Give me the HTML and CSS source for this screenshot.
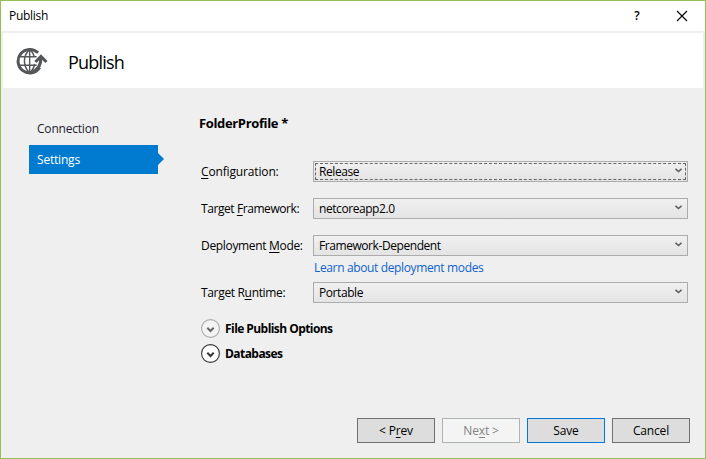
FILE: index.html
```html
<!DOCTYPE html>
<html lang="en">
<head>
<meta charset="utf-8">
<title>Publish</title>
<link rel="stylesheet" href="styles.css">
</head>
<body>
<div class="window">
  <div class="titlebar">
    <span class="caption">Publish</span>
    <span class="help">?</span>
    <svg class="close" width="12" height="12" viewBox="0 0 12 12"><path d="M1 1l10 10M11 1L1 11" stroke="#000" stroke-width="1.1" fill="none"/></svg>
  </div>
  <div class="header">
    <svg class="globe" width="32" height="28" viewBox="0 0 34 30" fill="none" stroke="#555658">
      <path d="M23.500 6.200A12.600 12.600 0 1 0 25.300 22" stroke-width="3.200"/>
      <path d="M14.500 2v26M3 10.500h19M3 19.500h19" stroke-width="1.500"/>
      <path d="M14.500 2.500C7 9 7 21 14.500 27.500M14.500 2.500C17.500 5 19 7.500 19.600 10.500M19.800 18C19.200 22 17.500 25 14.500 27.500" stroke-width="1.600"/>
      <path d="M16.500 27C23.500 24 26.500 20 26.600 11" stroke-width="3.300"/>
      <path d="M20.600 16L26.600 10L32.500 16" stroke-width="3.200"/>
    </svg>
    <h1 class="heading">Publish</h1>
  </div>
  <div class="body">
    <nav class="nav">
      <div class="nav-item">Connection</div>
      <div class="nav-item active">Settings</div>
    </nav>
    <main class="main">
      <h2 class="profile">FolderProfile *</h2>
      <div class="row">
        <label class="l-conf"><u>C</u>onfiguration:</label>
        <div class="select focused"><span>Release</span><svg class="chev" width="7" height="5" viewBox="0 0 7 5"><path d="M.5.8L3.500 3.500L6.500.8"/></svg></div>
      </div>
      <div class="row">
        <label class="l-frame">Target <u>F</u>ramework:</label>
        <div class="select"><span>netcoreapp2.0</span><svg class="chev" width="7" height="5" viewBox="0 0 7 5"><path d="M.5.8L3.500 3.500L6.500.8"/></svg></div>
      </div>
      <div class="row">
        <label>Deployment <u>M</u>ode:</label>
        <div class="select"><span>Framework-Dependent</span><svg class="chev" width="7" height="5" viewBox="0 0 7 5"><path d="M.5.8L3.500 3.500L6.500.8"/></svg></div>
      </div>
      <a class="link">Learn about deployment modes</a>
      <div class="row">
        <label>Target R<u>u</u>ntime:</label>
        <div class="select"><span>Portable</span><svg class="chev" width="7" height="5" viewBox="0 0 7 5"><path d="M.5.8L3.500 3.500L6.500.8"/></svg></div>
      </div>
      <div class="expander muted">
        <svg width="19" height="19" viewBox="0 0 19 19"><circle cx="9.500" cy="9.500" r="8.900"/><path d="M6.300 8.800L9.500 12L12.700 8.800"/></svg>
        <span>File Publish Options</span>
      </div>
      <div class="expander">
        <svg width="19" height="19" viewBox="0 0 19 19"><circle cx="9.500" cy="9.500" r="8.900"/><path d="M6.300 8.800L9.500 12L12.700 8.800"/></svg>
        <span>Databases</span>
      </div>
    </main>
  </div>
  <div class="footer">
    <button class="btn">&lt; P<u>r</u>ev</button>
    <button class="btn" disabled>Ne<u>x</u>t &gt;</button>
    <button class="btn primary">Save</button>
    <button class="btn">Cancel</button>
  </div>
</div>
</body>
</html>
```
FILE: styles.css
```css
* { box-sizing: border-box; }
body { margin: 0; font: 12px/16px "Open Sans", "Noto Sans", sans-serif; color: #000; }
.window { width: 706px; height: 459px; border: 1px solid #94bf56; background: #efefef; display: flex; flex-direction: column; }
.titlebar { height: 30px; background: #fff; display: flex; align-items: center; padding: 0 17px 0 8px; flex: none; }
.caption { flex: 1; letter-spacing: -.3px; }
.help { width: 10px; margin-right: 34px; font-weight: 600; font-size: 12px; text-align: center; }
.header { height: 55px; margin: 2px 2px 0 2px; background: #fff; display: flex; align-items: center; flex: none; padding-left: 13px; }
.globe { flex: none; }
.heading { margin: 0 0 0 20px; font-size: 18px; line-height: 24px; font-weight: 400; letter-spacing: -.8px; padding-top: 2px; }
.body { flex: 1; display: flex; padding-left: 28px; }
.nav { width: 129px; padding-top: 26px; flex: none; letter-spacing: -.2px; }
.nav-item { height: 29px; padding: 0 8px; display: flex; align-items: center; color: #1e1e2e; margin-bottom: 2px; }
.nav-item.active { background: #007bd0; color: #fff; position: relative; }
.nav-item.active::after { content: ""; position: absolute; left: 100%; top: 8px; border: 6px solid transparent; border-left-color: #007bd0; border-right: 0; }
.main { margin-left: 41px; width: 489px; padding-top: 27px; }
.profile { margin: 0 0 30px; font-size: 13px; line-height: 16px; font-weight: 700; letter-spacing: -.35px; }
.row { display: grid; grid-template-columns: 113px 375px; height: 21px; margin: 0 0 16px 1px; align-items: center; }
.row label { padding-left: 1px; white-space: nowrap; letter-spacing: -.33px; }
.row .l-conf { letter-spacing: -.15px; }
.row .l-frame { letter-spacing: -.42px; }
u { text-decoration-thickness: 1px; text-underline-offset: 2px; }
.select { height: 21px; border: 1px solid #acacac; background: linear-gradient(#f0f0f0, #e4e4e4); display: flex; align-items: center; justify-content: space-between; padding: 0 5px; white-space: nowrap; letter-spacing: -.43px; }
.focused { outline: 1px dashed #666; outline-offset: -3px; }
.chev { margin-top: -2px; }
.chev path { fill: none; stroke: #606060; stroke-width: 1.6; }
.link { display: block; margin: -12px 0 0 115px; color: #0e63cf; height: 16px; letter-spacing: -.36px; }
.link + .row { margin-top: 6px; }
.expander { display: flex; align-items: center; gap: 5px; height: 19px; margin: 0 0 6px 2px; font-weight: 700; letter-spacing: -.56px; }
.expander circle { fill: #fff; stroke: #333; stroke-width: 1.1; }
.expander path { fill: none; stroke: #333; stroke-width: 2; }
.muted circle { fill: #f3f3f3; stroke: #aaa; }
.muted path { stroke: #666; }
.footer { display: flex; justify-content: flex-end; gap: 7px; padding: 0 15px 15px 0; flex: none; }
.btn { width: 78px; height: 25px; border: 1px solid #707070; background: #ddd; padding: 0; font: inherit; color: #000; letter-spacing: -.15px; }
.btn:disabled { border-color: #adb2b5; background: #f4f4f4; color: #838383; }
.btn.primary { border-color: #0078d7; }
```
